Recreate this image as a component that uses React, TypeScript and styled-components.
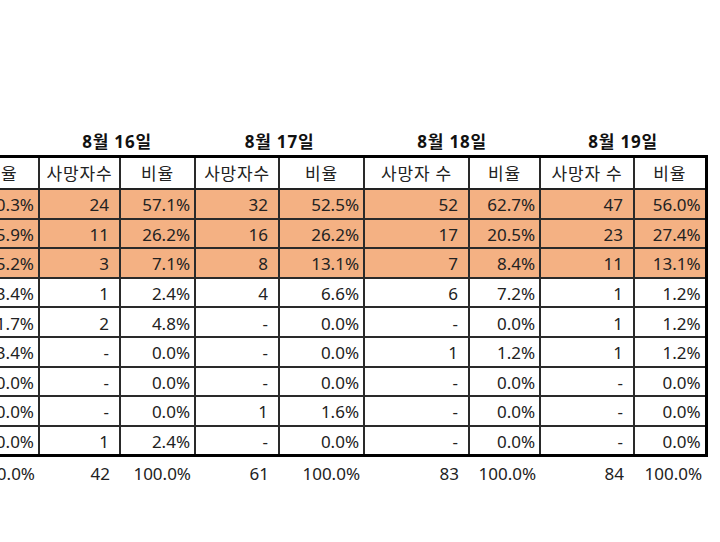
import React from "react";
import styled, { createGlobalStyle } from "styled-components";

const Global = createGlobalStyle`
  html, body { margin: 0; padding: 0; background: #ffffff; }
  body { font-family: "Noto Sans", "Noto Sans CJK KR", sans-serif; }
`;

const Page = styled.div`
  width: 720px;
  height: 542px;
  overflow: hidden;
  padding-top: 126px;
  box-sizing: border-box;
`;

const Table = styled.table`
  border-collapse: collapse;
  table-layout: fixed;
  margin-left: -38px;
  font-size: 17px;
  color: #222;
  width: 743px;
`;

const Col = styled.col<{ $w: number }>`
  width: ${(p) => p.$w}px;
`;

const TitleRow = styled.tr`
  height: 30px;
`;

const Title = styled.th`
  font-weight: 700;
  font-size: 17px;
  color: #111;
  text-align: center;
  padding: 0;
  letter-spacing: 0.8px;
`;

const HeadRow = styled.tr`
  height: 33px;
`;

const Head = styled.th<{ $last?: boolean }>`
  font-weight: 400;
  text-align: center;
  padding: 0;
  white-space: nowrap;
  background: #fff;
  border-top: 3px solid #000;
  border-bottom: 2px solid #222;
  border-left: 2px solid #2a2a2a;
  border-right: ${(p) => (p.$last ? "3px solid #000" : "2px solid #2a2a2a")};
  letter-spacing: 0.8px;
`;

const DataRow = styled.tr`
  height: 29.6px;
`;

const Cell = styled.td<{ $hl?: boolean; $kind: "count" | "ratio"; $last?: boolean; $bottom?: boolean }>`
  background: ${(p) => (p.$hl ? "#f4b183" : "#ffffff")};
  text-align: right;
  white-space: nowrap;
  overflow: hidden;
  padding: 2px ${(p) => (p.$kind === "count" ? "10px" : "4px")} 0 0;
  border-top: 2px solid #2a2a2a;
  border-left: 2px solid #2a2a2a;
  border-bottom: ${(p) => (p.$bottom ? "3px solid #000" : "2px solid #2a2a2a")};
  border-right: ${(p) => (p.$last ? "3px solid #000" : "2px solid #2a2a2a")};
`;

const TotalRow = styled.tr`
  height: 34px;
`;

const TotalCell = styled.td<{ $kind: "count" | "ratio" }>`
  text-align: right;
  white-space: nowrap;
  overflow: hidden;
  padding: 0 ${(p) => (p.$kind === "count" ? "10px" : "4px")} 0 0;
`;

type Pair = [string, string];

const prev = ["50.3%", "15.9%", "15.2%", "3.4%", "1.7%", "3.4%", "0.0%", "0.0%", "0.0%"];

const days: { title: string; countLabel: string; rows: Pair[]; total: Pair }[] = [
  {
    title: "8월 16일",
    countLabel: "사망자수",
    rows: [
      ["24", "57.1%"], ["11", "26.2%"], ["3", "7.1%"], ["1", "2.4%"], ["2", "4.8%"],
      ["-", "0.0%"], ["-", "0.0%"], ["-", "0.0%"], ["1", "2.4%"],
    ],
    total: ["42", "100.0%"],
  },
  {
    title: "8월 17일",
    countLabel: "사망자수",
    rows: [
      ["32", "52.5%"], ["16", "26.2%"], ["8", "13.1%"], ["4", "6.6%"], ["-", "0.0%"],
      ["-", "0.0%"], ["-", "0.0%"], ["1", "1.6%"], ["-", "0.0%"],
    ],
    total: ["61", "100.0%"],
  },
  {
    title: "8월 18일",
    countLabel: "사망자 수",
    rows: [
      ["52", "62.7%"], ["17", "20.5%"], ["7", "8.4%"], ["6", "7.2%"], ["-", "0.0%"],
      ["1", "1.2%"], ["-", "0.0%"], ["-", "0.0%"], ["-", "0.0%"],
    ],
    total: ["83", "100.0%"],
  },
  {
    title: "8월 19일",
    countLabel: "사망자 수",
    rows: [
      ["47", "56.0%"], ["23", "27.4%"], ["11", "13.1%"], ["1", "1.2%"], ["1", "1.2%"],
      ["1", "1.2%"], ["-", "0.0%"], ["-", "0.0%"], ["-", "0.0%"],
    ],
    total: ["84", "100.0%"],
  },
];

const widths = [76, 81, 75, 84, 85, 105, 71, 94, 72];

export default function App() {
  return (
    <>
      <Global />
      <Page>
        <Table>
          <colgroup>
            {widths.map((w, i) => (
              <Col key={i} $w={w} />
            ))}
          </colgroup>
          <thead>
            <TitleRow>
              <Title />
              {days.map((d) => (
                <Title key={d.title} colSpan={2}>
                  {d.title}
                </Title>
              ))}
            </TitleRow>
            <HeadRow>
              <Head>비율</Head>
              {days.map((d, di) => (
                <React.Fragment key={d.title}>
                  <Head>{d.countLabel}</Head>
                  <Head $last={di === days.length - 1}>비율</Head>
                </React.Fragment>
              ))}
            </HeadRow>
          </thead>
          <tbody>
            {prev.map((p, ri) => {
              const hl = ri < 3;
              const bottom = ri === prev.length - 1;
              return (
                <DataRow key={ri}>
                  <Cell $hl={hl} $kind="ratio" $bottom={bottom}>
                    {p}
                  </Cell>
                  {days.map((d, di) => (
                    <React.Fragment key={d.title}>
                      <Cell $hl={hl} $kind="count" $bottom={bottom}>
                        {d.rows[ri][0]}
                      </Cell>
                      <Cell $hl={hl} $kind="ratio" $bottom={bottom} $last={di === days.length - 1}>
                        {d.rows[ri][1]}
                      </Cell>
                    </React.Fragment>
                  ))}
                </DataRow>
              );
            })}
            <TotalRow>
              <TotalCell $kind="ratio">100.0%</TotalCell>
              {days.map((d) => (
                <React.Fragment key={d.title}>
                  <TotalCell $kind="count">{d.total[0]}</TotalCell>
                  <TotalCell $kind="ratio">{d.total[1]}</TotalCell>
                </React.Fragment>
              ))}
            </TotalRow>
          </tbody>
        </Table>
      </Page>
    </>
  );
}
